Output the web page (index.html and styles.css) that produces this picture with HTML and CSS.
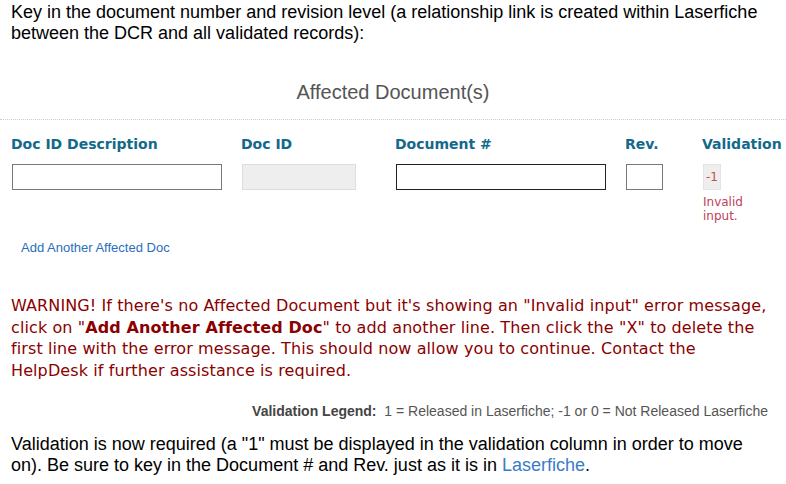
FILE: index.html
```html
<!DOCTYPE html>
<html lang="en">
<head>
    <meta charset="UTF-8">
    <title>Affected Documents</title>
    <link rel="stylesheet" href="styles.css">
</head>
<body>
    <div class="form">
        <!-- intro text -->
        <p class="intro">Key in the document number and revision level (a relationship link is created within Laserfiche between the DCR and all validated records):</p>

        <!-- section heading -->
        <div class="section-title">Affected Document(s)</div>

        <!-- table of affected docs -->
        <div class="doc-table">
            <div class="col col-desc">
                <div class="col-head">Doc ID Description</div>
                <input class="field wide" type="text">
            </div>
            <div class="col col-id">
                <div class="col-head">Doc ID</div>
                <input class="field readonly" type="text" readonly>
            </div>
            <div class="col col-num">
                <div class="col-head">Document #</div>
                <input class="field wide focus" type="text">
            </div>
            <div class="col col-rev">
                <div class="col-head">Rev.</div>
                <input class="field rev" type="text">
            </div>
            <div class="col col-val">
                <div class="col-head">Validation</div>
                <div class="val-box">-1</div>
                <div class="val-error">Invalid<br>input.</div>
            </div>
        </div>

        <a class="add-link" href="#">Add Another Affected Doc</a>

        <!-- warning -->
        <p class="warning">WARNING! If there's no Affected Document but it's showing an "Invalid input" error message, click on "<b>Add Another Affected Doc</b>" to add another line. Then click the "X" to delete the first line with the error message. This should now allow you to continue. Contact the HelpDesk if further assistance is required.</p>

        <div class="legend"><b>Validation Legend:</b>&nbsp; 1 = Released in Laserfiche; -1 or 0 = Not Released Laserfiche</div>

        <p class="outro">Validation is now required (a "1" must be displayed in the validation column in order to move on). Be sure to key in the Document # and Rev. just as it is in <a class="lf-link" href="#">Laserfiche</a>.</p>
    </div>
</body>
</html>
```

FILE: styles.css
```css
* {
    margin: 0px;
    padding: 0px;
    box-sizing: border-box;
}

body {
    background: #fff;
    font-family: "Liberation Sans", Arial, sans-serif;
    color: #000;
}

.form {
    width: 786px;
}

.intro {
    font-size: 18px;
    line-height: 21px;
    padding: 2px 0 0 11px;
    width: 780px;
}

.section-title {
    margin-top: 37px;
    text-align: center;
    font-size: 20px;
    color: #555;
    padding-bottom: 15px;
    border-bottom: 1px dotted #ccc;
}

.doc-table {
    display: flex;
    padding: 16px 0 0 11px;
}

.col-head {
    font-family: "DejaVu Sans", Verdana, sans-serif;
    font-weight: bold;
    font-size: 14px;
    color: #13698a;
    height: 28px;
}

.col-desc { width: 230px; }
.col-id { width: 154px; }
.col-num { width: 230px; }
.col-rev { width: 77px; }

.field {
    display: block;
    height: 26px;
    margin-left: 1px;
    border: 1px solid #777;
    background: #fff;
    font-size: 14px;
}

.wide { width: 210px; }

.readonly {
    width: 114px;
    background: #eee;
    border-color: #ddd;
}

.focus {
    border: 1px solid #222;
    outline: none;
}

.rev { width: 37px; }

.val-box {
    margin-left: 1px;
    width: 18px;
    height: 26px;
    background: #eee;
    border: 1px solid #e4e4e4;
    color: #c0504d;
    font-family: "DejaVu Sans", Verdana, sans-serif;
    font-size: 12px;
    line-height: 24px;
    text-align: center;
}

.val-error {
    margin-top: 5px;
    margin-left: 1px;
    font-family: "DejaVu Sans", Verdana, sans-serif;
    font-size: 12px;
    line-height: 14px;
    color: #c0405a;
}

.add-link {
    display: block;
    margin: 17px 0 0 21px;
    font-size: 13px;
    color: #2a6ebd;
    text-decoration: none;
}

.warning {
    margin-top: 40px;
    padding-left: 11px;
    font-family: "DejaVu Sans", Tahoma, sans-serif;
    font-size: 16px;
    line-height: 21.5px;
    letter-spacing: 0.1px;
    color: #8b0000;
    width: 773px;
}

.legend {
    margin-top: 22px;
    text-align: right;
    padding-right: 18px;
    font-size: 14px;
    color: #555;
}

.legend b {
    color: #444;
}

.outro {
    margin-top: 15px;
    padding-left: 11px;
    font-size: 18px;
    line-height: 21px;
    width: 760px;
}

.lf-link {
    color: #3a7bc8;
    text-decoration: none;
}
```
